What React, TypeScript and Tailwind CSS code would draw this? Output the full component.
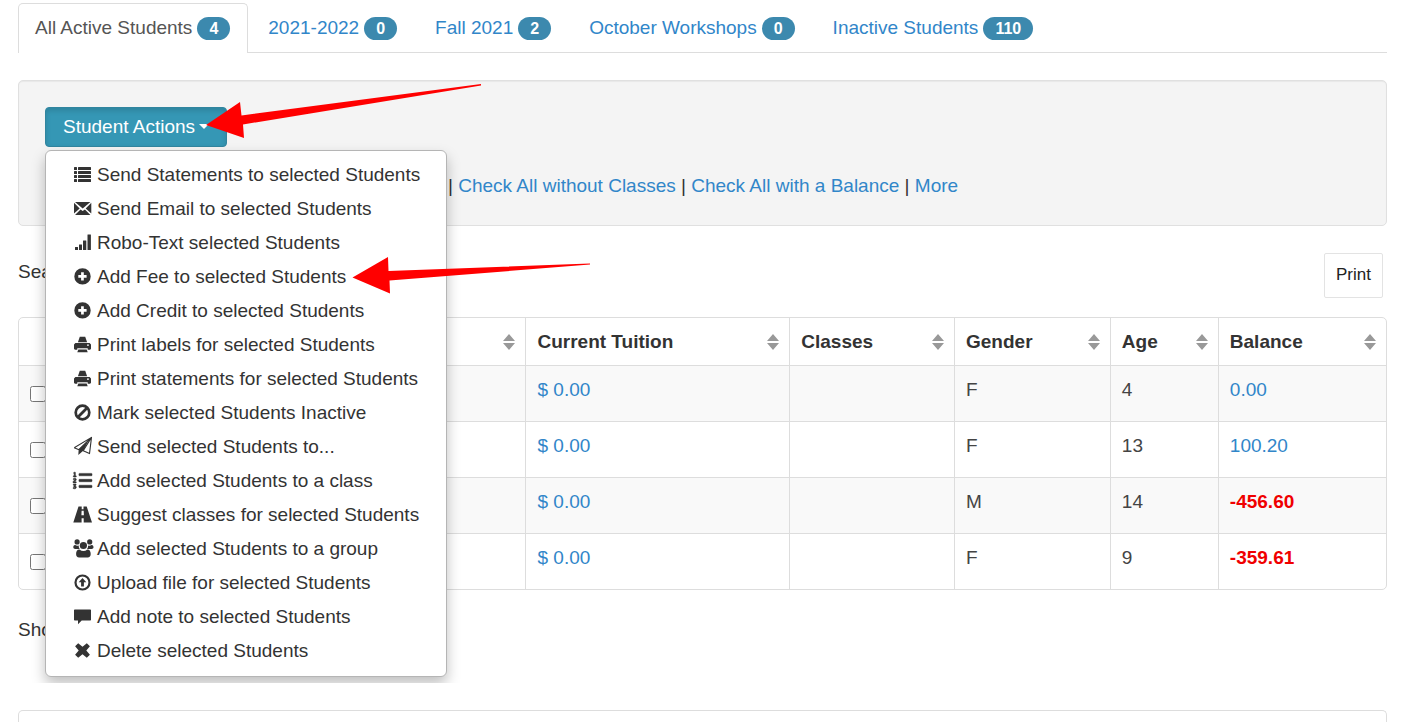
import type { ReactNode } from 'react';
import { FaListOl } from 'react-icons/fa';

const tabs = [
  { label: 'All Active Students', count: 4, active: true },
  { label: '2021-2022', count: 0 },
  { label: 'Fall 2021', count: 2 },
  { label: 'October Workshops', count: 0 },
  { label: 'Inactive Students', count: 110 },
];

const rows = [
  { tuition: '$ 0.00', gender: 'F', age: 4, balance: '0.00', owed: false },
  { tuition: '$ 0.00', gender: 'F', age: 13, balance: '100.20', owed: false },
  { tuition: '$ 0.00', gender: 'M', age: 14, balance: '-456.60', owed: true },
  { tuition: '$ 0.00', gender: 'F', age: 9, balance: '-359.61', owed: true },
];

const columns = [
  { label: '', width: 'w-[34%]' },
  { label: 'Current Tuition', width: 'w-[19.3%]' },
  { label: 'Classes', width: 'w-[12.05%]' },
  { label: 'Gender', width: 'w-[11.4%]' },
  { label: 'Age', width: 'w-[7.9%]' },
  { label: 'Balance', width: 'w-[12.3%]' },
];

function Glyph({ children }: { children: ReactNode }) {
  return (
    <svg viewBox="0 0 19 19" className="size-[19px] shrink-0 overflow-visible" fill="currentColor" aria-hidden="true">
      {children}
    </svg>
  );
}

const listIcon = (
  <Glyph>
    {[2, 6, 10, 14].map((y) => (
      <g key={y}>
        <rect x="1" y={y} width="3" height="3" rx="0.5" />
        <rect x="5" y={y} width="13" height="3" rx="0.5" />
      </g>
    ))}
  </Glyph>
);

const mailIcon = (
  <Glyph>
    <path d="M2 3h15.400L9.700 9.600zM1 3.800l5.700 5.600L1 14.400zM18.300 3.800v10.600l-5.600-5zM7.500 10.400l2.200 1.700 2.200-1.700 5.500 5.600H2z" />
  </Glyph>
);

const signalIcon = (
  <Glyph>
    <rect x="2" y="14" width="3" height="3" rx="0.3" />
    <rect x="6" y="11.500" width="3" height="5.500" rx="0.3" />
    <rect x="10" y="7.500" width="3.300" height="9.500" rx="0.3" />
    <rect x="14.500" y="1.500" width="3.400" height="15.500" rx="0.3" />
  </Glyph>
);

const plusIcon = (
  <Glyph>
    <path
      fillRule="evenodd"
      d="M9.500 1.200a8.200 8.200 0 1 0 0 16.400 8.200 8.200 0 0 0 0-16.400zM8.100 5.300h2.700v2.800h2.800v2.700h-2.800v2.800H8.100v-2.800H5.300V8.100h2.800z"
    />
  </Glyph>
);

const printIcon = (
  <Glyph>
    <path d="M6.800 1.800h5.400l1.900 5.400H4.900z" />
    <path
      fillRule="evenodd"
      d="M2.400 8h14.200L18 9.400v4.400l-.9.9h-2.400v-1.500H4.300v1.500H1.900l-.9-.9V9.400zM14 9.500v1.300h1.900V9.500z"
    />
    <path d="M5.300 14.400h8.400l1 2.800H4.300z" />
  </Glyph>
);

const banIcon = (
  <Glyph>
    <circle cx="9.500" cy="9.500" r="6.800" fill="none" stroke="currentColor" strokeWidth="2.700" />
    <path d="M4.800 14.200l9.400-9.400" stroke="currentColor" strokeWidth="2.800" />
  </Glyph>
);

const sendIcon = (
  <Glyph>
    <path
      d="M1.200 10.800L18.500.4l-2 16.200-6.300-2.800M18.500.4L5.800 12.600M1.200 10.800l4.800 2M18.500.4l-8.300 13.400"
      fill="none"
      stroke="currentColor"
      strokeWidth="1.100"
      strokeLinejoin="round"
    />
    <path d="M15.500 3.600L5.700 12.600 5.300 18l5.200-4.600z" />
  </Glyph>
);

const numberedListIcon = (
  <FaListOl className="size-[19px] shrink-0 overflow-visible" stroke="currentColor" strokeWidth="14" aria-hidden="true" />
);

const roadIcon = (
  <Glyph>
    <path
      fillRule="evenodd"
      d="M5.500 1.500h3.200v2.800h1.800V1.500h3.200L19 17.500h-8.300v-4.200H8.600v4.200H.3zM8.600 5.800l-.2 4.500h2.500l-.2-4.500z"
    />
  </Glyph>
);

const groupIcon = (
  <Glyph>
    <circle cx="4.100" cy="2.900" r="2.600" />
    <circle cx="16.700" cy="2.900" r="2.600" />
    <circle cx="10.400" cy="6.500" r="3.600" />
    <path d="M2.200 6c1.200.8 2.400.8 3.600.4-.2 1.600.2 2.700 1 3.500H2.200C1.100 9.900.3 9.300.3 8.300.3 7.100.8 5.900 2.200 6zM18.600 6c-1.200.8-2.400.8-3.600.4.2 1.600-.2 2.700-1 3.500h4.600c1.100 0 1.900-.6 1.900-1.600 0-1.200-.5-2.400-1.900-2.300z" />
    <path d="M6.400 10.500c2.700 2 5.300 2 8 0 2.300 0 3.300 2 3.300 4.600 0 2.300-1.100 3.400-3 3.400H6.100c-1.900 0-3-1.100-3-3.400 0-2.600 1-4.600 3.300-4.600z" />
  </Glyph>
);

const uploadIcon = (
  <Glyph>
    <circle cx="9.500" cy="9.500" r="7" fill="none" stroke="currentColor" strokeWidth="2.200" />
    <path d="M9.500 5l3.800 4.200h-2.400v4.300H8.100V9.200H5.700z" />
  </Glyph>
);

const commentIcon = (
  <Glyph>
    <path d="M1.600 2.500h15.800l.6.6v9.800l-.6.600H8.700L5 17.200v-3.700H1.600l-.6-.6V3.100z" />
  </Glyph>
);

const removeIcon = (
  <Glyph>
    <path d="M5.200 2.200l4.300 3.600 4.300-3.600L16.900 5.300l-3.600 4.200 3.600 4.200-3.100 3.100-4.300-3.600-4.300 3.600-3.100-3.100 3.600-4.200-3.600-4.200z" />
  </Glyph>
);

const actions = [
  { icon: listIcon, label: 'Send Statements to selected Students' },
  { icon: mailIcon, label: 'Send Email to selected Students' },
  { icon: signalIcon, label: 'Robo-Text selected Students' },
  { icon: plusIcon, label: 'Add Fee to selected Students' },
  { icon: plusIcon, label: 'Add Credit to selected Students' },
  { icon: printIcon, label: 'Print labels for selected Students' },
  { icon: printIcon, label: 'Print statements for selected Students' },
  { icon: banIcon, label: 'Mark selected Students Inactive' },
  { icon: sendIcon, label: 'Send selected Students to...' },
  { icon: numberedListIcon, label: 'Add selected Students to a class' },
  { icon: roadIcon, label: 'Suggest classes for selected Students' },
  { icon: groupIcon, label: 'Add selected Students to a group' },
  { icon: uploadIcon, label: 'Upload file for selected Students' },
  { icon: commentIcon, label: 'Add note to selected Students' },
  { icon: removeIcon, label: 'Delete selected Students' },
];

function Tabs() {
  return (
    <nav className="flex gap-[2px] border-b border-[#dddddd]">
      {tabs.map((tab) => (
        <a
          key={tab.label}
          href="#"
          className={
            tab.active
              ? '-mb-px flex h-[50px] items-center gap-[5px] rounded-t-[5px] border border-b-0 border-[#dddddd] bg-white pr-[17px] pb-[2px] pl-4 text-[#555555]'
              : 'flex h-[49px] items-center gap-[5px] border border-transparent px-[17px] text-[#3186c9]'
          }
        >
          {tab.label}
          <span className="mt-[2px] rounded-full bg-[#3c89ae] px-3 text-base leading-[23px] font-bold text-white">
            {tab.count}
          </span>
        </a>
      ))}
    </nav>
  );
}

function ActionMenu() {
  return (
    <ul className="absolute top-full left-0 z-10 mt-[3px] w-[402px] rounded-[6px] border border-[#b5b5b5] bg-white pt-[6px] pb-[9px] shadow-[0_7px_14px_rgba(0,0,0,0.25)] [clip-path:inset(-10px_-30px_-6px_-30px)]">
      {actions.map((action) => (
        <li key={action.label}>
          <a
            href="#"
            className="flex h-[34px] items-center gap-[5px] pl-[27px] whitespace-nowrap text-[#333333]"
          >
            {action.icon}
            {action.label}
          </a>
        </li>
      ))}
    </ul>
  );
}

function StudentTable() {
  return (
    <div className="overflow-hidden rounded-[5px] border border-[#dddddd]">
      <table className="w-full table-fixed border-separate border-spacing-0 text-left">
        <thead>
          <tr className="h-[47px]">
            <th className="w-[3.05%]" />
            {columns.map((col, i) => (
              <th
                key={i}
                className={
                  'px-[11px] font-bold text-[#333333] ' + (i > 0 ? 'border-l border-[#dddddd] ' : '') + col.width
                }
              >
                <div className="flex items-center justify-between">
                  <span>{col.label}</span>
                  <svg viewBox="0 0 12 16" className="-mr-px h-4 w-3" fill="#999999" aria-hidden="true">
                    <path d="M6 0l6 7H0zM0 9h12l-6 7z" />
                  </svg>
                </div>
              </th>
            ))}
          </tr>
        </thead>
        <tbody>
          {rows.map((row, i) => {
            const cell = 'border-t border-l border-[#dddddd] px-[11px] pt-[10px] align-top text-[#444444]';
            return (
              <tr key={i} className="h-14 odd:bg-[#f9f9f9]">
                <td className="border-t border-[#dddddd] pt-5 pl-[11px] align-top">
                  <input type="checkbox" aria-label={'Select student ' + (i + 1)} className="block size-4" />
                </td>
                <td className="border-t border-[#dddddd]" />
                <td className={cell}>
                  <a href="#" className="text-[#3186c9]">
                    {row.tuition}
                  </a>
                </td>
                <td className={cell} />
                <td className={cell}>{row.gender}</td>
                <td className={cell}>{row.age}</td>
                <td className={cell}>
                  <a href="#" className={row.owed ? 'font-bold text-[#f00000]' : 'text-[#3186c9]'}>
                    {row.balance}
                  </a>
                </td>
              </tr>
            );
          })}
        </tbody>
      </table>
    </div>
  );
}

export default function App() {
  return (
    <div className="relative overflow-hidden bg-white px-[18px] pt-[3px] font-['Liberation_Sans',Arial,sans-serif] text-[19px] leading-[27px] text-[#333333]">
      <Tabs />

      <section className="mt-[27px] rounded-[5px] border border-[#e0e0e0] bg-[#f4f4f4] p-[26px] shadow-[inset_0_1px_1px_rgba(0,0,0,0.05)]">
        <div className="relative w-fit">
          <button
            type="button"
            className="flex h-10 w-[182px] items-center gap-1 rounded-[4px] border border-[#31859f] bg-[#3597b5] pb-[2px] pl-[17px] text-white shadow-[inset_0_3px_5px_rgba(0,0,0,0.125)]"
          >
            Student Actions
            <span className="border-x-[5px] border-t-[5px] border-x-transparent border-t-white" />
          </button>
          <ActionMenu />
        </div>
        <p className="mt-[25px] pl-[403px]">
          |{' '}
          <a href="#" className="text-[#3186c9]">
            Check All without Classes
          </a>{' '}
          |{' '}
          <a href="#" className="text-[#3186c9]">
            Check All with a Balance
          </a>{' '}
          |{' '}
          <a href="#" className="text-[#3186c9]">
            More
          </a>
        </p>
      </section>

      <div className="mt-[27px] mb-[19px] flex items-start justify-between pr-1">
        <label className="flex items-center gap-2 pt-1">
          Search:
          <input type="search" className="h-7 w-60 rounded border border-[#cccccc] px-2" />
        </label>
        <button
          type="button"
          className="h-[45px] rounded-[2px] border border-[#e3e3e3] bg-white px-[11px] pb-[2px] text-[17px] text-[#222222]"
        >
          Print
        </button>
      </div>

      <StudentTable />

      <p className="mt-[26px]">Showing</p>

      <section className="mt-[67px] h-3 rounded-t-[5px] border border-b-0 border-[#dddddd]" />

      <svg
        className="pointer-events-none absolute top-0 left-0 z-20 h-[300px] w-[600px]"
        viewBox="0 0 600 300"
        fill="#ff0000"
        aria-hidden="true"
      >
        <path d="M206 125L240 102l1.500 13.500L481 84v1.500L243 124.500l1 13.500z" />
        <path d="M352.500 277.500L388 257l.5 14L590 263.500v1L389.500 280.500l.5 13z" />
      </svg>
    </div>
  );
}
